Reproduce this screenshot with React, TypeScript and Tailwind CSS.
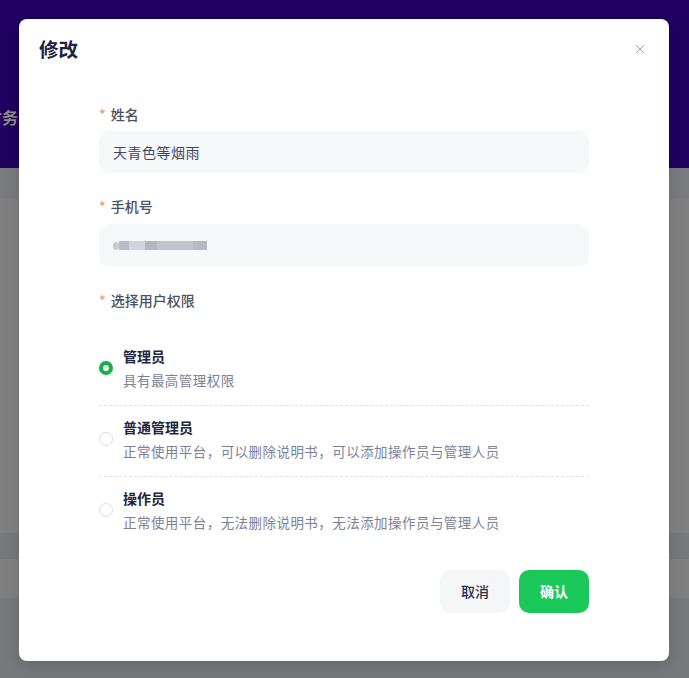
import { X } from "lucide-react";

const FONT = { fontFamily: '"Noto Sans CJK SC", "Noto Sans", sans-serif' };

const roles = [
  { title: "管理员", desc: "具有最高管理权限", checked: true },
  { title: "普通管理员", desc: "正常使用平台，可以删除说明书，可以添加操作员与管理人员", checked: false },
  { title: "操作员", desc: "正常使用平台，无法删除说明书，无法添加操作员与管理人员", checked: false },
];

function Label({ text }: { text: string }) {
  return (
    <div className="flex items-center gap-[5px] text-[14px] font-medium text-[#4b5161] leading-5">
      <span className="text-[#f0a35e]">*</span>
      <span>{text}</span>
    </div>
  );
}

function Radio({ checked }: { checked: boolean }) {
  return checked ? (
    <span className="w-[14px] h-[14px] rounded-full border-[4px] border-[#10b249] bg-white shrink-0" />
  ) : (
    <span className="w-[14px] h-[14px] rounded-full border border-[#d9dde5] bg-white shrink-0" />
  );
}

export default function App() {
  return (
    <div className="relative w-[689px] h-[678px] overflow-hidden bg-[#808080]" style={FONT}>
      {/* page behind the mask */}
      <div className="flex flex-col">
        <div className="h-[168px] bg-[#1f0060] pt-[106px]">
          <span className="block w-[40px] -ml-[14px] text-[16px] font-bold leading-[22px] text-[#8d8d8d]">财务</span>
        </div>
        <div className="h-[30px] bg-[#7a7b7e]" />
        <div className="h-[335px]" />
        <div className="h-[26px] bg-[#77787b]" />
        <div className="h-[39px]" />
        <div className="h-[80px] bg-[#77787b]" />
      </div>

      {/* modal */}
      <div className="absolute left-[19px] top-[19px] w-[650px] h-[642px] rounded-[8px] bg-white shadow-[0_4px_16px_rgba(0,0,0,0.15)]">
        <div className="flex items-center justify-between pl-[20px] pr-[22px] pt-[19px]">
          <h2 className="text-[19.5px] font-bold text-[#1c2442] leading-[22px]">修改</h2>
          <X className="w-[14px] h-[14px] text-[#8c94a8]" strokeWidth={1.5} />
        </div>

        <div className="mx-[80px] mt-[44px] flex flex-col">
          <Label text="姓名" />
          <div className="mt-[7px] h-[42px] rounded-[10px] bg-[#f7f8fa] flex items-center px-[14px] text-[14px] tracking-[0.5px] text-[#3e465e]">
            天青色等烟雨
          </div>

          <div className="mt-[23px]">
            <Label text="手机号" />
          </div>
          <div className="mt-[8px] h-[43px] rounded-[10px] bg-[#f7f8fa] flex items-center px-[14px]">
            <div className="flex items-center h-[9px] blur-[0.6px]">
              <span className="w-[6px] h-[8px] rounded-full bg-[#c9cbd3]" />
              <span className="w-[10px] h-[9px] bg-[#b9bcc7]" />
              <span className="w-[16px] h-[9px] bg-[#d2d4db]" />
              <span className="w-[12px] h-[9px] bg-[#b2b5c2]" />
              <span className="w-[36px] h-[9px] bg-[#c2c4cd]" />
              <span className="w-[14px] h-[9px] bg-[#b6b9c5]" />
            </div>
          </div>

          <div className="mt-[23px]">
            <Label text="选择用户权限" />
          </div>

          <div className="mt-[36px] flex flex-col">
            {roles.map((r, i) => (
              <div
                key={r.title}
                className={
                  i < roles.length - 1
                    ? "flex items-center gap-[10px] border-b border-dashed border-[#dde1e8] pb-[15px] mb-[11px]"
                    : "flex items-center gap-[10px]"
                }
              >
                <span className="flex">
                  <Radio checked={r.checked} />
                </span>
                <div className="flex flex-col">
                  <span className="text-[14px] font-bold text-[#1f2640] leading-5">{r.title}</span>
                  <span className="mt-[4px] text-[13.5px] tracking-[0.45px] text-[#7a8198] leading-5">
                    {r.desc}
                  </span>
                </div>
              </div>
            ))}
          </div>

          <div className="mt-[38px] flex justify-end gap-[9px]">
            <button className="w-[70px] h-[43px] rounded-[10px] bg-[#f5f6f8] text-[14px] font-medium text-[#2a3147]">
              取消
            </button>
            <button className="w-[70px] h-[43px] rounded-[10px] bg-[#1bc85a] text-[14px] font-bold text-white">
              确认
            </button>
          </div>
        </div>
      </div>
    </div>
  );
}
